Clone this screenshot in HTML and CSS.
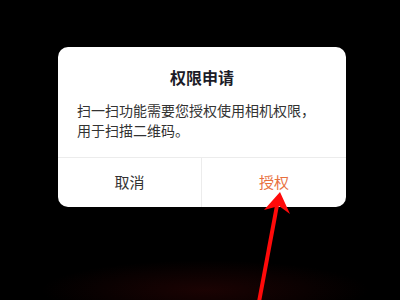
FILE: index.html
```html
<!DOCTYPE html>
<html lang="zh">
<head>
<meta charset="utf-8">
<link rel="stylesheet" href="styles.css">
</head>
<body>
<div class="screen">
  <div class="dialog">
    <div class="content">
      <h1 class="title">权限申请</h1>
      <p class="message">扫一扫功能需要您授权使用相机权限，<br>用于扫描二维码。</p>
    </div>
    <div class="actions">
      <div class="btn cancel">取消</div>
      <div class="btn ok">授权</div>
    </div>
  </div>
  <div class="glow"></div>
  <svg class="arrow" width="400" height="300" viewBox="0 0 400 300">
    <line x1="259" y1="302" x2="278" y2="200" stroke="#ff0a0a" stroke-width="4"/>
    <polygon points="280,192 290,214 279,206 264,210" fill="#ff0a0a"/>
  </svg>
</div>
</body>
</html>
```

FILE: styles.css
```css
html, body {
  margin: 0;
  padding: 0;
  background: #000;
}
.screen {
  position: relative;
  width: 400px;
  height: 300px;
  overflow: hidden;
  padding-top: 47px;
  box-sizing: border-box;
  font-family: "Noto Sans CJK SC", "Noto Sans", sans-serif;
}
.dialog {
  margin-left: 58px;
  width: 288px;
  height: 160px;
  background: #fff;
  border-radius: 10px;
  display: flex;
  flex-direction: column;
  position: relative;
  z-index: 1;
}
.content {
  height: 111px;
  box-sizing: border-box;
  padding: 19px 19px 0;
  border-bottom: 1px solid #ececec;
}
.title {
  margin: 0;
  font-size: 16px;
  line-height: 22px;
  font-weight: 700;
  text-align: center;
  color: #1c1c28;
}
.message {
  margin: 12px 0 0;
  font-size: 14px;
  line-height: 20px;
  color: #333;
}
.actions {
  flex: 1;
  display: grid;
  grid-template-columns: 144px 1fr;
}
.btn {
  display: flex;
  align-items: center;
  justify-content: center;
  font-size: 15px;
  padding-bottom: 2px;
}
.cancel {
  color: #333;
  border-right: 1px solid #ececec;
}
.ok {
  color: #e8703e;
}
.glow {
  position: absolute;
  left: 40px;
  top: 260px;
  width: 330px;
  height: 60px;
  background: radial-gradient(ellipse at center, rgba(60, 6, 6, 0.45), rgba(0, 0, 0, 0) 70%);
}
.arrow {
  position: absolute;
  left: 0;
  top: 0;
  z-index: 2;
}
```
